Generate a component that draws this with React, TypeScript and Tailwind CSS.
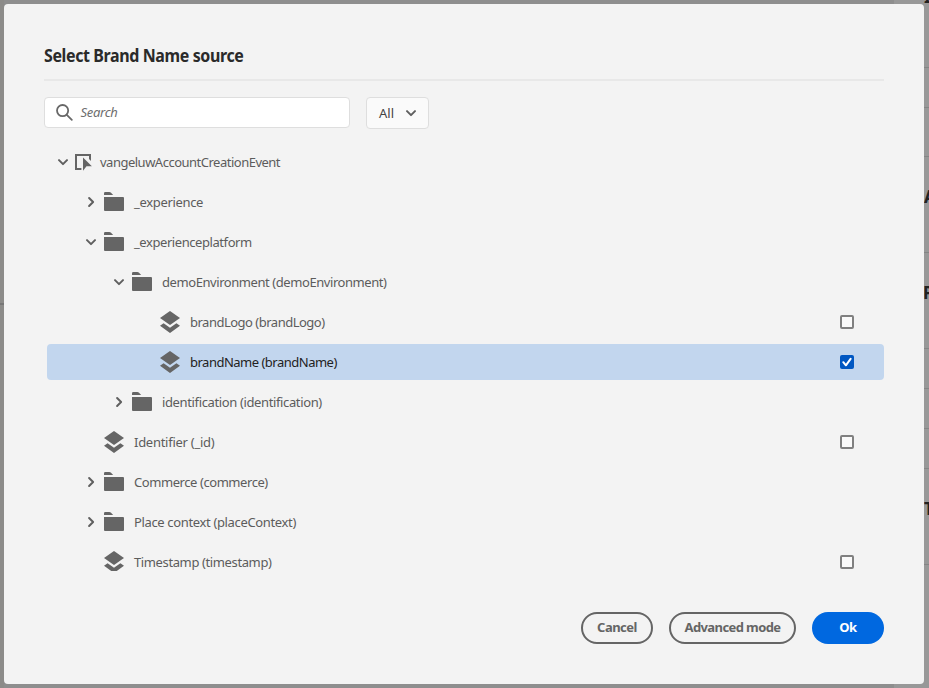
type IconKind = "event" | "folder" | "field";

interface TreeNode {
  label: string;
  icon: IconKind;
  indent: string;
  tracking: string;
  expanded?: boolean;
  selectable?: boolean;
  checked?: boolean;
}

const nodes: TreeNode[] = [
  { label: "vangeluwAccountCreationEvent", icon: "event", indent: "pl-[7px]", tracking: "tracking-[-0.5px]", expanded: true },
  { label: "_experience", icon: "folder", indent: "pl-[35px]", tracking: "tracking-[-0.33px]", expanded: false },
  { label: "_experienceplatform", icon: "folder", indent: "pl-[35px]", tracking: "tracking-[-0.43px]", expanded: true },
  { label: "demoEnvironment (demoEnvironment)", icon: "folder", indent: "pl-[63px]", tracking: "tracking-[-0.43px]", expanded: true },
  { label: "brandLogo (brandLogo)", icon: "field", indent: "pl-[91px]", tracking: "tracking-[-0.5px]", selectable: true },
  { label: "brandName (brandName)", icon: "field", indent: "pl-[91px]", tracking: "tracking-[-0.5px]", selectable: true, checked: true },
  { label: "identification (identification)", icon: "folder", indent: "pl-[63px]", tracking: "tracking-[-0.37px]", expanded: false },
  { label: "Identifier (_id)", icon: "field", indent: "pl-[35px]", tracking: "tracking-[-0.27px]", selectable: true },
  { label: "Commerce (commerce)", icon: "folder", indent: "pl-[35px]", tracking: "tracking-[-0.43px]", expanded: false },
  { label: "Place context (placeContext)", icon: "folder", indent: "pl-[35px]", tracking: "tracking-[-0.35px]", expanded: false },
  { label: "Timestamp (timestamp)", icon: "field", indent: "pl-[35px]", tracking: "tracking-[-0.38px]", selectable: true },
];

function Chevron({ open }: { open: boolean }) {
  return (
    <svg width="18" height="18" viewBox="0 0 18 18" className="block shrink-0" fill="none" stroke="#5f5f5f" strokeWidth="2" strokeLinecap="round" strokeLinejoin="round">
      {open ? <path d="M5 7.1 9 11.1 13 7.1" /> : <path d="M7.1 5 11.1 9 7.1 13" />}
    </svg>
  );
}

function NodeIcon({ kind }: { kind: IconKind }) {
  if (kind === "event") {
    return (
      <svg width="18" height="20" viewBox="0 0 18 20" className="block shrink-0" fill="#656565">
        <path d="M1 2h16v7l-2-1.900V4H3v12h4.400v2H1z" />
        <path d="M9 5.400v13.400l3.500-4.500h5.400z" />
      </svg>
    );
  }
  if (kind === "folder") {
    return (
      <svg width="20" height="20" viewBox="0 0 20 20" className="block shrink-0" fill="#656565">
        <path d="M0 3V1.200Q0 0 1.200 0H5.300Q6.300 0 7 .700L9.200 3z" />
        <path d="M0 5h19q1 0 1 1v12q0 1-1 1H1q-1 0-1-1z" />
      </svg>
    );
  }
  return (
    <svg width="20" height="22" viewBox="0 0 20 22" className="block shrink-0" fill="#656565">
      <path d="M10 0 20 7 10 14 0 7z" />
      <path d="M3.600 12.200 10 16.700l6.400-4.500L20 14.700 10 22 0 14.700z" />
    </svg>
  );
}

function Checkbox({ checked }: { checked?: boolean }) {
  if (checked) {
    return (
      <span className="mr-[30px] flex h-3.5 w-3.5 items-center justify-center rounded-[2px] bg-[#0057c2]">
        <svg width="10" height="10" viewBox="0 0 10 10" fill="none" stroke="#fff" strokeWidth="2" strokeLinecap="round" strokeLinejoin="round">
          <path d="M1.300 5.200 3.900 8.300 8.600 1.800" />
        </svg>
      </span>
    );
  }
  return <span className="mr-[30px] h-3.5 w-3.5 rounded-[2px] border-2 border-[#808080] bg-[#fafafa]" />;
}

function TreeRow({ node }: { node: TreeNode }) {
  const { icon, expanded } = node;
  return (
    <li className={`flex h-9 shrink-0 items-center rounded ${node.indent} ${node.checked ? "bg-[#c2d6ee] text-[#222]" : "text-[#5c5c5c]"}`}>
      <span className="w-[18px] shrink-0">{expanded !== undefined && <Chevron open={expanded} />}</span>
      <span className={icon === "event" ? "ml-[2px]" : "ml-1"}>
        <NodeIcon kind={icon} />
      </span>
      <span className={`grow whitespace-nowrap text-[13px] leading-5 ${icon === "event" ? "ml-2" : "ml-2.5"} ${node.tracking}`}>
        <span>{node.label}</span>
      </span>
      {node.selectable && <Checkbox checked={node.checked} />}
    </li>
  );
}

function PageBehind() {
  const rules = ["mt-[67px]", "mt-[39px]", "mt-[48px]", "mt-[95px]", "mt-[95px]", "mt-[39px]", "mt-[39px]", "mt-[39px]", "mt-[95px]"];
  return (
    <div className="flex h-full justify-between bg-[#8e8e8e]" aria-hidden="true">
      <div className="h-full w-1 bg-[#8c8b89] pt-[303px]">
        <div className="h-0.5 bg-[#777]" />
      </div>
      <div className="relative h-full w-[35px] bg-[#989898]">
        {rules.map((m, i) => (
          <div key={i} className={`h-px bg-[#858585] ${m}`} />
        ))}
        <span className="absolute top-[-13px] left-[30px] text-[17px] leading-5 font-bold text-[#222]">I</span>
        <span className="absolute top-[187px] left-[30px] text-[17px] leading-5 font-bold text-[#222]">A</span>
        <span className="absolute top-[283px] left-[29px] text-[17px] leading-5 font-bold text-[#222]">P</span>
        <span className="absolute top-[499px] left-[30px] text-[17px] leading-5 font-bold text-[#222]">T</span>
      </div>
    </div>
  );
}

export default function App() {
  return (
    <div className="relative h-[688px] w-[929px] overflow-hidden font-['Noto_Sans','Open_Sans',sans-serif]">
      <PageBehind />
      <section role="dialog" className="absolute top-1 left-1 flex h-[679.5px] w-[920px] flex-col rounded-[4px] bg-[#f3f3f3] px-10 pt-10">
        <h1 className="h-[34px] text-[17px] leading-6 font-bold tracking-[-0.4px] whitespace-nowrap text-[#2a2a2a]">
          <span className="inline-block origin-left scale-x-[0.94]">Select Brand Name source</span>
        </h1>
        <hr className="mt-[1px] h-0.5 border-0 bg-[#e8e8e8]" />
        <div className="mt-4 flex gap-4">
          <label className="flex h-[31px] w-[306px] items-center rounded-[4px] border border-[#dedede] bg-white pl-[11px]">
            <svg width="17" height="17" viewBox="0 0 17 17" fill="none" stroke="#686868" strokeWidth="1.800" strokeLinecap="round">
              <circle cx="6.600" cy="6.600" r="5.600" />
              <path d="m10.800 10.800 5 5" />
            </svg>
            <span className="mb-0.5 ml-[7.5px] text-[13px] leading-5 tracking-[-0.3px] text-[#6e6e6e] italic">Search</span>
          </label>
          <button className="flex h-8 w-[63px] items-center rounded-[4px] border border-[#dedede] bg-[#fafafa] pl-3 text-[13px] text-[#444]">
            <span className="w-[23px] pt-0.5 text-left tracking-[0px]">All</span>
            <Chevron open />
          </button>
        </div>
        <ul className="mt-[15px] ml-[3px] flex h-[427px] flex-col gap-1 overflow-hidden">
          {nodes.map((n) => (
            <TreeRow key={n.label} node={n} />
          ))}
        </ul>
        <footer className="mt-[40.5px] flex justify-end gap-4 text-[13px] font-bold text-[#656565]">
          <button className="h-8 w-[72px] rounded-full border-2 border-[#656565] tracking-[-0.5px] whitespace-nowrap">Cancel</button>
          <button className="h-8 w-[127px] rounded-full border-2 border-[#656565] tracking-[-0.6px] whitespace-nowrap">Advanced mode</button>
          <button className="h-8 w-[72px] rounded-full bg-[#0068e0] tracking-[-0.5px] whitespace-nowrap text-white">Ok</button>
        </footer>
      </section>
    </div>
  );
}
